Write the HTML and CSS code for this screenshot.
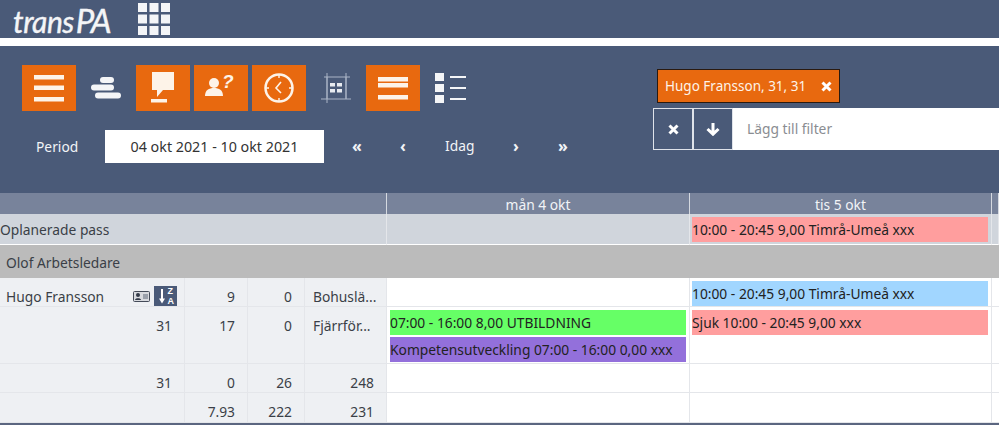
FILE: index.html
```html
<!DOCTYPE html>
<html lang="en">
<head>
    <meta charset="UTF-8">
    <title>transPA</title>
    <link rel="stylesheet" href="styles.css">
</head>
<body>
    <header class="topbar">
        <div class="logo">trans<span class="logo-pa">PA</span></div>
        <svg class="apps" width="32" height="32" viewBox="0 0 32 32" fill="#f4f5f7">
            <rect x="0" y="0" width="9" height="9"/><rect x="11.5" y="0" width="9" height="9"/><rect x="23" y="0" width="9" height="9"/>
            <rect x="0" y="11.5" width="9" height="9"/><rect x="11.5" y="11.5" width="9" height="9"/><rect x="23" y="11.5" width="9" height="9"/>
            <rect x="0" y="23" width="9" height="9"/><rect x="11.5" y="23" width="9" height="9"/><rect x="23" y="23" width="9" height="9"/>
        </svg>
    </header>

    <section class="toolbar">
        <div class="toolbar-left">
            <div class="tools">
                <button class="tool active">
                    <svg width="30" height="30" viewBox="0 0 30 30" fill="#fdf3e8"><rect y="2" width="30" height="4.5"/><rect y="12.5" width="30" height="4.5"/><rect y="24" width="30" height="4.5"/></svg>
                </button>
                <button class="tool plain">
                    <svg width="30" height="24" viewBox="0 0 30 24" fill="#f4f5f7"><rect x="9" y="1" width="14" height="6" rx="3"/><rect x="0" y="8.5" width="23" height="6" rx="3"/><rect x="4" y="16.5" width="26" height="6" rx="3"/></svg>
                </button>
                <button class="tool active">
                    <svg width="26" height="32" viewBox="0 0 26 32" fill="#fdf3e8"><path d="M2 0h22v18H13l-6 7v-7H2z"/><rect x="1" y="27" width="16" height="3.5"/></svg>
                </button>
                <button class="tool active">
                    <svg width="34" height="34" viewBox="0 0 34 34" fill="#fdf3e8"><circle cx="10" cy="12" r="5"/><path d="M1 25c0-6 4-8 9-8s9 2 9 8z"/><text x="18" y="17" class="tool-q">?</text></svg>
                </button>
                <button class="tool active">
                    <svg width="32" height="32" viewBox="0 0 32 32" fill="none" stroke="#fdf3e8"><circle cx="16" cy="16" r="13.5" stroke-width="2.5"/><path d="M18 10l-5 6 5 5" stroke-width="1.6"/><path d="M16 3v3M16 26v3M3 16h3M26 16h3" stroke-width="1.4"/></svg>
                </button>
                <button class="tool plain">
                    <svg width="30" height="30" viewBox="0 0 30 30" fill="none" stroke="#aab4c6"><path d="M6 0v30M25 0v26M0 26h30M3 4h26M6 4v22M25 4v22"/><g fill="#e8ebf0" stroke="none"><rect x="9" y="10" width="5" height="3.5"/><rect x="16" y="10" width="5" height="3.5"/><rect x="9" y="16" width="5" height="3.5"/><rect x="16" y="16" width="5" height="3.5"/></g></svg>
                </button>
                <button class="tool active">
                    <svg width="30" height="26" viewBox="0 0 30 26" fill="#fdf3e8"><rect y="2" width="30" height="4.5"/><rect y="8" width="30" height="4.5"/><rect y="20" width="30" height="4.5"/></svg>
                </button>
                <button class="tool plain">
                    <svg width="31" height="30" viewBox="0 0 31 30" fill="#f4f5f7"><rect width="9" height="8"/><rect y="11" width="9" height="8"/><rect y="22" width="9" height="8"/><rect x="15" y="3" width="16" height="2"/><rect x="15" y="14" width="16" height="2"/><rect x="15" y="25" width="16" height="2"/></svg>
                </button>
            </div>
            <div class="period">
                <span class="period-label">Period</span>
                <div class="period-input">04 okt 2021 - 10 okt 2021</div>
                <nav class="period-nav">
                    <span class="nav-item first">«</span>
                    <span class="nav-item second">‹</span>
                    <span class="nav-today">Idag</span>
                    <span class="nav-item third">›</span>
                    <span class="nav-item fourth">»</span>
                </nav>
            </div>
        </div>
        <div class="toolbar-right">
            <div class="tag">
                Hugo Fransson, 31, 31
                <svg width="11" height="11" viewBox="0 0 11 11" stroke="#fff" stroke-width="3"><path d="M1.5 1.5l8 8M9.5 1.5l-8 8"/></svg>
            </div>
            <div class="filter">
                <button class="filter-btn">
                    <svg width="11" height="11" viewBox="0 0 11 11" stroke="#fff" stroke-width="3"><path d="M1.5 1.5l8 8M9.5 1.5l-8 8"/></svg>
                </button>
                <button class="filter-btn">
                    <svg width="14" height="13" viewBox="0 0 14 13" fill="none" stroke="#fff" stroke-width="3"><path d="M7 0v11M1.5 6L7 11.2 12.5 6"/></svg>
                </button>
                <div class="filter-input">Lägg till filter</div>
            </div>
        </div>
    </section>

    <section class="schedule">
        <div class="day-head spacer"></div>
        <div class="day-head">mån 4 okt</div>
        <div class="day-head">tis 5 okt</div>
        <div class="day-head end"></div>

        <div class="unplanned-label">Oplanerade pass</div>
        <div class="unplanned-cell"></div>
        <div class="unplanned-cell">
            <div class="event red">10:00 - 20:45 9,00 Timrå-Umeå xxx</div>
        </div>
        <div class="unplanned-cell end"></div>

        <div class="group">Olof Arbetsledare</div>

        <div class="cell name">
            <span class="name-text">Hugo Fransson</span>
            <svg class="card-icon" width="17" height="11" viewBox="0 0 17 11"><rect x="0.5" y="0.5" width="16" height="10" rx="1" fill="#d8dade" stroke="#444b58"/><circle cx="5" cy="4" r="2" fill="#333a48"/><path d="M2 9c0-2.5 6-2.500 6 0z" fill="#333a48"/><rect x="10" y="3" width="5" height="5" fill="#9aa0aa"/></svg>
            <span class="sort-icon">
                <svg width="12" height="20" viewBox="0 0 12 20" fill="#fff"><rect x="7" y="3" width="2" height="11"/><path d="M5 12.500h6l-3 5z"/></svg>
                <span class="sort-letters">Z<br>A</span>
            </span>
        </div>
        <div class="cell num">9</div>
        <div class="cell num">0</div>
        <div class="cell">Bohuslä...</div>
        <div class="day"></div>
        <div class="day"><div class="event blue">10:00 - 20:45 9,00 Timrå-Umeå xxx</div></div>
        <div class="day end"></div>

        <div class="cell num">31</div>
        <div class="cell num">17</div>
        <div class="cell num">0</div>
        <div class="cell">Fjärrför...</div>
        <div class="day">
            <div class="event green">07:00 - 16:00 8,00 UTBILDNING</div>
            <div class="event purple">Kompetensutveckling 07:00 - 16:00 0,00 xxx</div>
        </div>
        <div class="day"><div class="event red">Sjuk 10:00 - 20:45 9,00 xxx</div></div>
        <div class="day end"></div>

        <div class="cell num">31</div>
        <div class="cell num">0</div>
        <div class="cell num">26</div>
        <div class="cell num">248</div>
        <div class="day"></div>
        <div class="day"></div>
        <div class="day end"></div>

        <div class="cell num">&nbsp;</div>
        <div class="cell num">7.93</div>
        <div class="cell num">222</div>
        <div class="cell num">231</div>
        <div class="day"></div>
        <div class="day"></div>
        <div class="day end"></div>
    </section>
</body>
</html>
```

FILE: styles.css
```css
:root {
    --navy: #4a5a78;
    --orange: #e8690f;
    --line: #e4e6ea;
    --side: #eef0f3;
    --text: #3a3f47;
}

* {
    box-sizing: border-box;
    margin: 0;
    padding: 0;
}

html, body {
    height: 100%;
    overflow: hidden;
}

body {
    font-family: "Noto Sans", "Open Sans", sans-serif;
    font-size: 13.8px;
    color: var(--text);
    background-color: white;
}

button {
    border: none;
    cursor: pointer;
    background: none;
}

.topbar {
    height: 38px;
    background-color: var(--navy);
    display: flex;
    align-items: center;
    padding-left: 13px;
}

.logo {
    font-family: "Lato", sans-serif;
    font-style: italic;
    font-size: 30px;
    line-height: 38px;
    color: #f4f5f7;
    width: 125px;
    padding-top: 2px;
    letter-spacing: -0.5px;
    -webkit-text-stroke: 0.4px #f4f5f7;
    white-space: nowrap;
}

.logo-pa {
    font-size: 33px;
    margin-left: 2px;
    letter-spacing: -2px;
}

.apps {
    flex: none;
}

.toolbar {
    height: 147px;
    margin-top: 8px;
    background-color: var(--navy);
    display: flex;
    padding: 19px 0 0 22px;
}

.toolbar-left {
    width: 631px;
}

.tools {
    display: flex;
    gap: 4px;
}

.tool {
    width: 54px;
    height: 46px;
    display: flex;
    align-items: center;
    justify-content: center;
}

.tool.active {
    background-color: var(--orange);
}

.tool.plain {
    width: 52px;
}

.tool-q {
    font-family: "Liberation Sans", sans-serif;
    font-size: 19px;
    font-weight: bold;
    font-style: italic;
    fill: #fdf3e8;
}

.period {
    display: flex;
    align-items: center;
    margin-top: 19px;
    color: #f2f4f7;
}

.period-label {
    width: 83px;
    padding-left: 14px;
}

.period-input {
    width: 219px;
    height: 33px;
    line-height: 33px;
    background-color: white;
    color: #333;
    font-size: 14.3px;
    text-align: center;
}

.period-nav {
    position: relative;
    width: 300px;
    height: 33px;
    line-height: 32px;
}

.nav-item {
    position: absolute;
    top: 0;
    font-size: 16px;
    font-weight: bold;
}

.nav-item.first { left: 28px; }
.nav-item.second { left: 76px; }
.nav-item.third { left: 189px; }
.nav-item.fourth { left: 234px; }

.nav-today {
    position: absolute;
    left: 121px;
}

.toolbar-right {
    flex: 1;
    padding-top: 4px;
}

.tag {
    display: inline-flex;
    align-items: center;
    gap: 15px;
    height: 34px;
    margin-left: 4px;
    padding: 0 7px;
    background-color: var(--orange);
    border: 1px solid #2a1a10;
    color: #fdf3e8;
    font-size: 13.5px;
    white-space: nowrap;
}

.filter {
    display: flex;
    height: 42px;
    margin-top: 5px;
}

.filter-btn {
    width: 40px;
    height: 42px;
    border: 1px solid #dfe3ea;
    background-color: var(--navy);
    display: flex;
    align-items: center;
    justify-content: center;
}

.filter-input {
    flex: 1;
    background-color: white;
    color: #8a8d92;
    line-height: 42px;
    padding-left: 14px;
}

.schedule {
    display: grid;
    grid-template-columns: 185px 63px 57px 82px 303px 302px 1fr;
    grid-template-rows: 21px 31px 33px 29px 57px 29px 30px;
    border-bottom: 2px solid #5b6680;
}

.day-head {
    background-color: #78839b;
    color: #f2f4f7;
    text-align: center;
    line-height: 23px;
    border-right: 1px solid #d5d9e0;
}

.day-head.spacer {
    grid-column: span 4;
}

.unplanned-label {
    grid-column: span 4;
    background-color: #d0d5dc;
    line-height: 31px;
    border-right: 1px solid var(--line);
    border-bottom: 1px solid white;
}

.unplanned-cell {
    background-color: #d0d5dc;
    border-right: 1px solid var(--line);
    border-bottom: 1px solid white;
    padding: 3px 3px 0 2px;
}

.group {
    grid-column: 1 / -1;
    background-color: #bbbbbb;
    line-height: 35px;
    padding-left: 6px;
}

.cell {
    background-color: var(--side);
    border-right: 1px solid var(--line);
    border-bottom: 1px solid var(--line);
    padding: 5px 7px 0 8px;
    line-height: 28px;
    white-space: nowrap;
    overflow: hidden;
}

.num {
    text-align: right;
    padding-right: 12px;
}

.name {
    display: flex;
    align-items: flex-start;
    padding: 0 7px 0 6px;
}

.name-text {
    flex: 1;
    padding-top: 5px;
}

.card-icon {
    margin: 13px 4px 0 0;
}

.sort-icon {
    position: relative;
    width: 23px;
    height: 20px;
    margin-top: 8px;
    background-color: var(--navy);
    display: block;
}

.sort-letters {
    position: absolute;
    top: 0;
    right: 3px;
    font-family: "Liberation Sans", sans-serif;
    font-size: 9px;
    font-weight: bold;
    line-height: 10px;
    color: #fff;
}

.day {
    border-right: 1px solid var(--line);
    border-bottom: 1px solid var(--line);
    padding: 3px 3px 0 2px;
}

.day.end {
    border-right: none;
}

.event {
    height: 25px;
    line-height: 25px;
    margin-bottom: 2px;
    color: #222;
    white-space: nowrap;
    overflow: hidden;
}

.red { background-color: #ff9e9e; }
.blue { background-color: #a1d6ff; }
.green { background-color: #66ff66; margin-left: 1px; }
.purple { background-color: #9370db; margin-left: 1px; }
```
